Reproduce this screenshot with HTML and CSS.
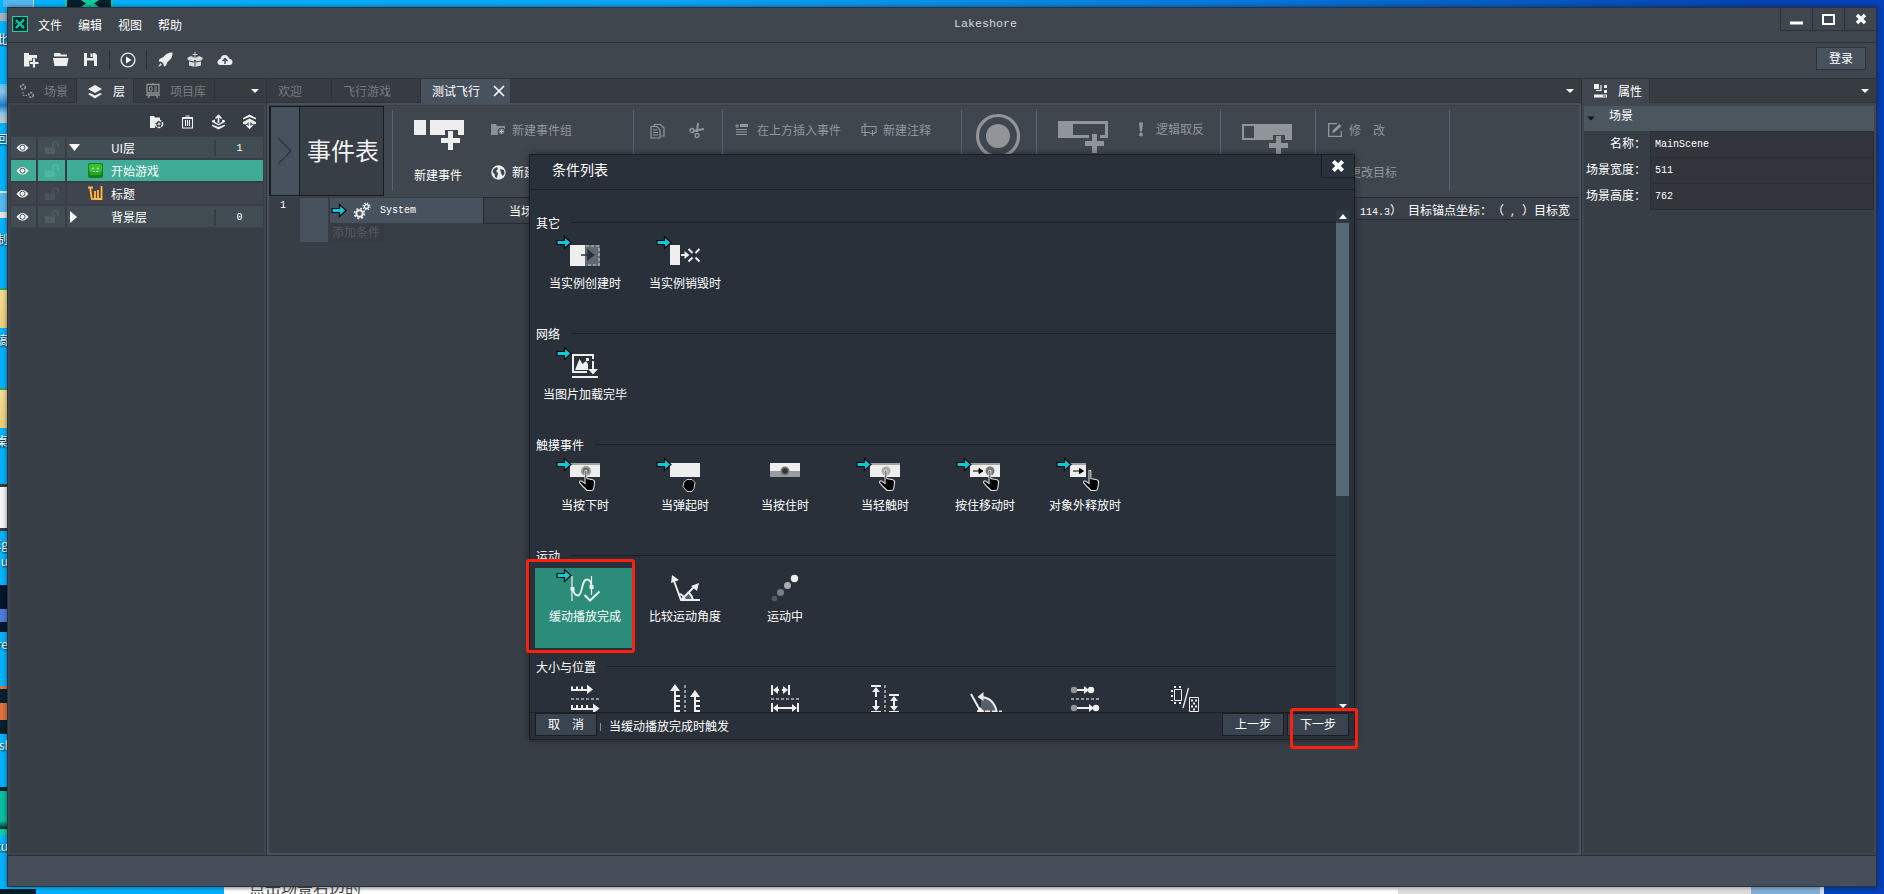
FILE: index.html
```html
<!DOCTYPE html>
<html lang="zh-CN">
<head>
<meta charset="utf-8">
<title>Lakeshore</title>
<link rel="stylesheet" href="styles.css">
</head>
<body>
<svg class="defs" width="0" height="0" aria-hidden="true">
  <symbol id="go" viewBox="0 0 16 15"><path d="M1 5.500h7.500v-4l6.500 6-6.500 6v-4H1z" fill="#0ccbd8" stroke="#05080c" stroke-width="1.200"/></symbol>
  <symbol id="eye" viewBox="0 0 14 10"><path d="M.5 5Q7-3.500 13.500 5 7 13 .5 5z" fill="#eee"/><circle cx="7" cy="4.700" r="2.700" fill="none" stroke="#46525a" stroke-width="1"/></symbol>
  <symbol id="lock" viewBox="0 0 16 14"><path d="M1 6.500h10v6.500H1zM5 9.500h2v1.500H5z" fill="currentColor" fill-rule="evenodd"/><path d="M9 6V3q0-2 2.500-2T14 3v3" fill="none" stroke="currentColor" stroke-width="1.600"/></symbol>
  <symbol id="hand" viewBox="0 0 18 22"><path d="M7 1q1.200-.8 1.800.5V9l6 1.200q2 .5 1.800 3l-1 6.300q-.3 1.500-2 1.500H9L5 17 1.500 13q0-2 2-1.500L7 14z" fill="#000" stroke="#dedede" stroke-width="1.100"/></symbol>
  <symbol id="tri" viewBox="0 0 8 4"><path d="M0 0h8L4 4z" fill="currentColor"/></symbol>
  <symbol id="cross" viewBox="0 0 12 12"><path d="M2 2l8 8M10 2l-8 8" stroke="#fff" stroke-width="3.400"/></symbol>
</svg>

<div class="desktop">
  <div class="bit bit-glass"></div><div class="bit bit-logo"><svg width="48" height="7"><path d="M14 7L24 0h8L22 7zM14 0h8l10 7h-8z" fill="#08cfa0"/></svg></div>
  <div class="bit bit-knob"></div><div class="bit cap" style="top:31px">此</div>
  <div class="bit bit-bin"></div><div class="bit cap" style="top:131px">回</div>
  <div class="bit bit-ctrl"></div><div class="bit cap" style="top:231px">制</div>
  <div class="bit bit-folder" style="top:288px"></div><div class="bit cap" style="top:332px">搞</div>
  <div class="bit bit-folder" style="top:388px"></div><div class="bit cap" style="top:433px">桌</div>
  <div class="bit bit-doc"></div><div class="bit cap" style="top:536px">Eg</div><div class="bit cap" style="top:553px">u</div>
  <div class="bit bit-blue"></div><div class="bit cap" style="top:636px">re</div>
  <div class="bit bit-orange"></div><div class="bit cap" style="top:737px">sl</div>
  <div class="bit bit-green"></div><div class="bit cap" style="top:838px">tu</div>
  <div class="under"><div class="under-dark"></div><div class="under-doc">点击场景右边的</div><div class="under-gray"></div><div class="under-sky"></div></div>
</div>

<div class="window">
  <header class="titlebar">
    <svg class="logo" width="16" height="16"><rect x=".5" y=".5" width="15" height="15" fill="#082c2e" stroke="#0bd9b0"/><path d="M4 4l8 8M12 3.500L4 12" stroke="#0cc9a4" stroke-width="2.200"/><path d="M3 8l3-3M9 12l3-3" stroke="#0a8f78"/></svg>
    <nav class="menu"><span>文件</span><span>编辑</span><span>视图</span><span>帮助</span></nav>
    <div class="app-name">Lakeshore</div>
    <div class="win-btns">
      <span><svg width="14" height="14"><rect x="0" y="9.500" width="13" height="3" fill="#fff"/></svg></span>
      <span><svg width="14" height="14"><rect x="1" y="3" width="11" height="9" fill="none" stroke="#fff" stroke-width="2"/></svg></span>
      <span><svg width="12" height="12"><use href="#cross"/></svg></span>
    </div>
  </header>

  <div class="toolbar">
    <svg width="16" height="16"><path d="M1 1h5v2h8v3.500H9.500V9H6.500v5.500H1z" fill="#eee"/><path d="M11 6v9.500M6.500 10.800H15.500" stroke="#3f464e" stroke-width="4"/><path d="M11 6.500v9M7 11H15.500" stroke="#eee" stroke-width="2.200"/></svg>
    <svg width="16" height="16"><path d="M1 1h6l1 1.500h6V4.500H1zM0 6h15.500L14 14H1.500z" fill="#eee"/></svg>
    <svg width="16" height="16"><path d="M1 1h11l2 2v11h-3V8.500H4V14H1z" fill="#eee"/><path d="M4 1h6v5H4z" fill="#3f464e"/><path d="M7.500 1.500h2v3.500h-2z" fill="#eee"/></svg>
    <i></i>
    <svg width="16" height="16"><circle cx="8" cy="8" r="6.900" fill="none" stroke="#eee" stroke-width="1.400"/><path d="M6 4.500L11.500 8 6 11.500z" fill="#fff"/></svg>
    <i></i>
    <svg width="16" height="16"><path d="M15.500.5Q10 0 6.500 5L2.500 7 1.500 9.500l3 .3 2 2 .5 3L9 13.500l1.500-3.500Q16 6 15.500.5z" fill="#eee"/><path d="M3.500 11L1 15l4-2z" fill="#ddd"/></svg>
    <svg width="16" height="16"><path d="M8 0v6M5.500 2.500h5" stroke="#c9cbcc"/><path d="M0 6l4-2 4 2 4-2 4 2-2 3v4.500L8 15l-6-1.500V9z" fill="#d9dbdb"/><path d="M2 9l5 1 1-2 1 2 5-1M8 8v7" fill="none" stroke="#42494f"/></svg>
    <svg width="16" height="16"><path d="M4 13Q0 13 .5 9.500 1 7 3.500 7 4 3 8 3q3 0 4 3.500 3.500.5 3.500 3.500T12.500 13z" fill="#eee"/><path d="M8 12V7M5.500 9L8 6.500 10.500 9" fill="none" stroke="#3f464e" stroke-width="1.400"/></svg>
    <button class="login">登录</button>
  </div>

  <main class="body">
    <aside class="left">
      <div class="tabs">
        <div class="tab scene dim"><svg width="16" height="16"><g fill="none" stroke="#92979b" stroke-width="1.800" stroke-dasharray="2 1"><circle cx="4" cy="4" r="2.300"/><circle cx="12" cy="12" r="2.300"/></g><path d="M4 9v3.500h4" fill="none" stroke="#92979b" stroke-dasharray="2 1"/></svg>场景</div>
        <div class="tab layer on"><svg width="14" height="14"><path d="M7 0l7 4-7 4-7-4z" fill="#eee"/><path d="M0 9l2-1 5 2.500L12 8l2 1-7 4.500z" fill="#eee"/></svg>层</div>
        <div class="tab lib dim"><svg width="14" height="15"><path d="M7 0v2M1 1.500h12v8.500H1zM0 12h14M4 12l-2 3M10 12l2 3" fill="none" stroke="#8d9295" stroke-width="1.300"/><path d="M3.500 4h2.500v4h-2.500zM8 4h3M8 6h3M8 8h3" fill="none" stroke="#8d9295"/></svg>项目库</div>
        <div class="rest"><svg width="8" height="4"><use href="#tri"/></svg></div>
      </div>
      <div class="layers">
        <div class="layer-tools">
          <svg width="15" height="14"><path d="M1 1h4l1 1.500h5V5Q5 6 6 13H1z" fill="#eee"/><circle cx="10" cy="9" r="3.600" fill="none" stroke="#eee" stroke-width="1.500" stroke-dasharray="3 1"/><path d="M10 7.500v3M8.500 9h3" stroke="#eee"/></svg>
          <svg width="15" height="14"><path d="M2.500 3.500h10v9.500h-10zM2 2.500h11M5.500 1h4M5.500 5v6M7.500 5v6M9.500 5v6" fill="none" stroke="#eee" stroke-width="1.100"/></svg>
          <svg width="15" height="16"><path d="M7.500 9V1.500M4.500 4.500l3-3 3 3" fill="none" stroke="#eee" stroke-width="1.700"/><path d="M1 6.500l3-1v2.500l3.500 2 3.500-2V5.500l3 1v1.500l-6.500 3.500L1 8zM1 10.500l6.500 2.500 6.500-2.500v1.500l-6.500 3.500L1 12z" fill="#eee"/></svg>
          <svg width="15" height="16"><path d="M7.500 7v7M4.500 11l3 3 3-3" fill="none" stroke="#eee" stroke-width="1.700"/><path d="M1 4l6.500-3.500L14 4v1.500L7.500 3 1 5.500zM1 8l6.500-3.500L14 8v2l-3 .5-3.500-3-3.500 3L1 10z" fill="#eee"/></svg>
        </div>
        <div class="lrow">
          <span><svg width="13" height="10"><use href="#eye"/></svg></span><span class="lk"><svg width="16" height="14"><use href="#lock"/></svg></span>
          <span class="lname"><svg class="tw" width="11" height="8"><path d="M0 0h11L5.500 7z" fill="#fff"/></svg><b><u>UI</u>层</b><em>1</em></span>
        </div>
        <div class="lrow sel">
          <span><svg width="13" height="10"><use href="#eye"/></svg></span><span class="lk"><svg width="16" height="14"><use href="#lock"/></svg></span>
          <span class="lname"><svg class="th" width="15" height="15"><rect width="15" height="15" rx="2" fill="#18811b"/><rect x="1" y="1" width="13" height="8" rx="2" fill="#39c230"/><rect x="2" y="9" width="11" height="3" fill="#28a624"/><path d="M4 6l2-1M9 5l2 1M5 8.500h5" stroke="#f1ffec" stroke-dasharray="2 1"/></svg><b>开始游戏</b></span>
        </div>
        <div class="lrow plain">
          <span><svg width="13" height="10"><use href="#eye"/></svg></span><span class="lk"><svg width="16" height="14"><use href="#lock"/></svg></span>
          <span class="lname"><svg class="th" width="15" height="15"><path d="M0 1.500h5M2 1l2 13M7 5v9M10 4v9M13.500 0v14M5 13h8" fill="none" stroke="#6b3c17" stroke-width="3.400"/><path d="M0 1.500h5M2 1l2 13M7 5v9M10 4v9M13.500 0v14M5 13h8" fill="none" stroke="#f2be55" stroke-width="1.800"/></svg><b>标题</b></span>
        </div>
        <div class="lrow">
          <span><svg width="13" height="10"><use href="#eye"/></svg></span><span class="lk"><svg width="16" height="14"><use href="#lock"/></svg></span>
          <span class="lname"><svg class="tw" width="11" height="12"><path d="M1 0v12l7-6z" fill="#fff"/></svg><b>背景层</b><em>0</em></span>
        </div>
      </div>
    </aside>

    <section class="center">
      <div class="tabs">
        <div class="tab c1 dim">欢迎</div><div class="tab c2 dim">飞行游戏</div>
        <div class="tab c3 on">测试飞行<svg width="12" height="12"><path d="M1 1l10 10M11 1L1 11" stroke="#fff" stroke-width="1.600"/></svg></div>
        <div class="rest"><svg width="8" height="4"><use href="#tri"/></svg></div>
      </div>
      <div class="sheet">
        <div class="ribbon">
          <div class="sheet-box"><span class="chev"><svg width="16" height="28"><path d="M1 1l13 13L1 27" fill="none" stroke="#2f343a" stroke-width="1.400"/></svg></span><span class="sheet-name">事件表</span></div>
          <div class="grp ga">
            <div class="big"><svg width="50" height="32"><path d="M0 1h12v15H0zM16 1h34v15H44v-5H31v5H16z" fill="#eee"/><path d="M36.500 12v19M27 21.500h19" stroke="#eee" stroke-width="5"/></svg><span>新建事件</span></div>
            <div class="col">
              <div class="act dim"><svg width="15" height="14"><path d="M0 1h5l1 2h8v4Q8 5 7 12H0z" fill="#8c9195"/><circle cx="10.500" cy="8.500" r="3.500" fill="#737a80" stroke="#3f464e"/><path d="M10.500 6.500v4M8.500 8.500h4" stroke="#c0c2c4"/></svg>新建事件组</div>
              <div class="act"><svg width="15" height="15"><circle cx="7.500" cy="7.500" r="7.200" fill="#eee"/><path d="M2.500 4l3.500-2 1 2-2 2 2 2-1 5-2-1-.5-3-2-2zM9 4l4 1 .5 4-2 2-1.500-3z" fill="#3f464e"/></svg>新建</div>
            </div>
          </div>
          <div class="grp gb">
            <svg width="15" height="16"><path d="M4.500 4V1.500h6L14 5v8h-3" fill="none" stroke="#92979b" stroke-width="1.200"/><path d="M1 3.500h6L10 7v8H1zM3 7h4M3 9.500h5M3 12h5" fill="none" stroke="#92979b" stroke-width="1.200"/></svg>
            <svg width="16" height="16"><path d="M9 0L8 9M15 6L4 8" stroke="#92979b" stroke-width="2"/><circle cx="3" cy="7.500" r="2" fill="none" stroke="#92979b" stroke-width="1.300"/><circle cx="8" cy="12.500" r="2" fill="none" stroke="#92979b" stroke-width="1.300"/></svg>
          </div>
          <div class="grp gc">
            <div class="act dim"><svg width="14" height="14"><path d="M0 3h4M2 1v4" stroke="#92979b"/><path d="M5 1h8v3H5z" fill="#92979b"/><path d="M1 6.500h11M1 9h11M1 11.500h11" stroke="#92979b" stroke-width="1.200"/></svg>在上方插入事件</div>
            <div class="act dim"><svg width="16" height="14"><path d="M9 9.500H1v-6h14v6h-2M4 1v11M2.500 1h3M2.500 12.500h3M11.500 7v6M9 10.500h5" fill="none" stroke="#92979b" stroke-width="1.100"/></svg>新建注释</div>
          </div>
          <div class="grp gd"><svg width="46" height="46"><circle cx="23" cy="23" r="20.500" fill="none" stroke="#919498" stroke-width="3.200"/><circle cx="23" cy="23" r="12" fill="#919498"/></svg></div>
          <div class="grp ge">
            <svg width="50" height="32"><path d="M0 0h50v17H42v-3h5V3H15v11h16v3H0z" fill="#919498"/><path d="M36.500 13v19M27 22.500h19" stroke="#919498" stroke-width="5"/></svg>
            <div class="act dim"><svg width="6" height="15"><path d="M1 1q2-1.500 4 0L4 9.500H2z" fill="#919498"/><circle cx="3" cy="12.500" r="2" fill="#919498"/></svg>逻辑取反</div>
          </div>
          <div class="grp gf"><svg width="50" height="32"><path d="M0 0h50v16H43v-5H31v5H0zM2 2v12h10V2z" fill="#919498" fill-rule="evenodd"/><path d="M36.500 12v20M27 21.500h19" stroke="#919498" stroke-width="5"/></svg></div>
          <div class="grp gg">
            <div class="act dim"><svg width="14" height="14"><path d="M9 .7H.7v12.600h12.600V8" fill="none" stroke="#92979b" stroke-width="1.300"/><path d="M4 10l1-3 6.500-6 2 2-6.500 6z" fill="#92979b"/></svg>修　改</div>
            <div class="act dim"><svg width="14" height="14"></svg>更改目标</div>
          </div>
        </div>
        <div class="events">
          <div class="num">1</div>
          <div class="bar"></div>
          <div class="cond">
            <div class="cond-row"><svg width="16" height="15"><use href="#go"/></svg><svg width="18" height="18"><g fill="none" stroke="#eee"><circle cx="6.500" cy="11.500" r="3.200" stroke-width="2"/><circle cx="6.500" cy="11.500" r="5" stroke-width="1.600" stroke-dasharray="2 1.930"/><circle cx="13.500" cy="4.500" r="2" stroke-width="1.300"/><circle cx="13.500" cy="4.500" r="3.400" stroke-width="1.200" stroke-dasharray="1.400 1.270"/></g></svg><span>System</span></div>
            <div class="add">添加条件</div>
          </div>
          <div class="run"><span>当场景</span></div>
          <div class="params"><span class="mono">114.3</span>）<span class="mono"> </span>目标锚点坐标：（<span class="mono"> , </span>）目标宽</div>
        </div>
      </div>
    </section>

    <aside class="right">
      <div class="tabs">
        <div class="tab prop on"><svg width="14" height="14"><path d="M0 0h5v5H0zM10 1h3v3h-3zM10 6h3v3h-3zM0 10.500h13v3H0z" fill="#eee"/><path d="M2 6.500h5V1" fill="none" stroke="#eee" stroke-width="1.200"/><path d="M9 12h3" stroke="#3f464e"/></svg>属性</div>
        <div class="rest"><svg width="8" height="4"><use href="#tri"/></svg></div>
      </div>
      <div class="props">
        <div class="phead"><svg width="8" height="5"><use href="#tri"/></svg>场景</div>
        <div class="prow"><label>名称：</label><div class="inp">MainScene</div></div>
        <div class="prow"><label>场景宽度：</label><div class="inp">511</div></div>
        <div class="prow"><label>场景高度：</label><div class="inp">762</div></div>
      </div>
    </aside>
  </main>
  <footer class="status"></footer>
</div>

<div class="dialog">
  <div class="dhead"><span>条件列表</span><div class="dclose"><svg width="14" height="14" viewBox="0 0 12 12"><use href="#cross"/></svg></div></div>
  <div class="dbody">
    <div class="list">
      <section><h3>其它</h3><div class="tiles">
        <div class="tile"><svg width="60" height="40"><path d="M15 10h15v21H15z" fill="#eee"/><path d="M30 10h15v21H30z" fill="#616871"/><path d="M31 11h13v19H31" fill="none" stroke="#969a9e" stroke-width="2" stroke-dasharray="3 2"/><path d="M26 20h8M33 15.500l5.500 4.500-5.500 4.500z" fill="#29303a" stroke="#29303a" stroke-width="1.500"/><use href="#go" x="1" y="0" width="16" height="15"/></svg>当实例创建时</div>
        <div class="tile"><svg width="60" height="40"><path d="M15 10h10v20H15z" fill="#eee"/><path d="M26 20h5" stroke="#eee" stroke-width="2"/><path d="M29.500 16l5 4-5 4z" fill="#eee"/><path d="M33.500 14l4 4M44.500 14l-4 4M33.500 26.500l4-4M44.500 26.500l-4-4" stroke="#eee" stroke-width="2"/><use href="#go" x="1" y="0" width="16" height="15"/></svg>当实例销毁时</div>
      </div></section>
      <section><h3>网络</h3><div class="tiles">
        <div class="tile"><svg width="60" height="40"><path d="M32 26H18V9h20v4" fill="none" stroke="#eee" stroke-width="2"/><path d="M20 24l4.500-11 3 5 3.500-3 2 3v6z" fill="#eee"/><path d="M31 12h3v3h-3z" fill="#eee"/><path d="M38 15v10M17 31h26" stroke="#eee" stroke-width="2"/><path d="M33 23h10l-5 5.500z" fill="#eee"/><use href="#go" x="1" y="0" width="16" height="15"/></svg>当图片加载完毕</div>
      </div></section>
      <section><h3>触摸事件</h3><div class="tiles">
        <div class="tile"><svg width="60" height="40"><path d="M15 6h30v14H15z" fill="#eee"/><path d="M15 6h30v2H15z" fill="#a0a3a6"/><circle cx="31" cy="14" r="5" fill="#999"/><circle cx="31" cy="14" r="3" fill="#666"/><use href="#hand" x="23" y="12.500" width="18" height="22"/><use href="#go" x="1" y="0" width="16" height="15"/></svg>当按下时</div>
        <div class="tile"><svg width="60" height="40"><path d="M15 6h30v14H15z" fill="#eee"/><path d="M29 25l3-2.500h5l3 3-1 6-2 3h-5l-4-5z" fill="#000" stroke="#ccc"/><use href="#go" x="1" y="0" width="16" height="15"/></svg>当弹起时</div>
        <div class="tile"><svg width="60" height="40"><path d="M15 6h30v8H15z" fill="#eee"/><path d="M15 14h30v6H15z" fill="#999c9f"/><circle cx="30" cy="14" r="4.500" fill="#777"/><circle cx="30" cy="14" r="2.700" fill="#333"/></svg>当按住时</div>
        <div class="tile"><svg width="60" height="40"><path d="M15 6h30v14H15z" fill="#eee"/><path d="M15 6h30v2H15z" fill="#a0a3a6"/><circle cx="31" cy="14" r="4.500" fill="#aaa"/><use href="#hand" x="23" y="12.500" width="18" height="22"/><use href="#go" x="1" y="0" width="16" height="15"/></svg>当轻触时</div>
        <div class="tile"><svg width="60" height="40"><path d="M15 6h30v14H15z" fill="#eee"/><path d="M15 6h30v2H15z" fill="#a0a3a6"/><circle cx="35" cy="14" r="4.500" fill="#777"/><path d="M18 14h7M24 11.500l4 2.500-4 2.500z" stroke="#000"/><use href="#hand" x="27" y="12.500" width="18" height="22"/><use href="#go" x="1" y="0" width="16" height="15"/></svg>按住移动时</div>
        <div class="tile"><svg width="60" height="40"><path d="M15 6h16v14H15z" fill="#eee"/><path d="M15 6h16v2H15z" fill="#a0a3a6"/><path d="M18 14h8M24.500 11.500l4 2.500-4 2.500z" stroke="#000"/><use href="#hand" x="27" y="12.500" width="18" height="22"/><use href="#go" x="1" y="0" width="16" height="15"/></svg>对象外释放时</div>
      </div></section>
      <section><h3>运动</h3><div class="tiles">
        <div class="tile picked"><svg width="60" height="40"><path d="M17 8v25M36.500 8v19" stroke="#eee" stroke-width="1.200"/><path d="M17.500 21q2 6.500 5.500 6.500c5 0 3-16 9-16q4 0 4.500 7" fill="none" stroke="#eee" stroke-width="1.800"/><path d="M15.500 19h4v4h-4zM34.500 17h4v4h-4z" fill="#eee"/><path d="M29.500 27l5.500 5.500 9.500-9" fill="none" stroke="#eee" stroke-width="2"/><use href="#go" x="1" y="0" width="16" height="15"/></svg>缓动播放完成</div>
        <div class="tile"><svg width="60" height="40"><path d="M27 32l6-9q5 3 5 9z" fill="#59626b"/><path d="M45 32H26L19 13M26 32l13-13M33 24q4 3 5 8M24 26q4 0 6 6" fill="none" stroke="#eee" stroke-width="1.900"/><path d="M16 15l1-8 7 5zM36 18l8-3-2 8z" fill="#eee"/></svg>比较运动角度</div>
        <div class="tile"><svg width="60" height="40"><circle cx="39.500" cy="10.500" r="3.700" fill="#eee"/><circle cx="32.500" cy="17.500" r="3.500" fill="#aaadb1"/><circle cx="25.500" cy="24.500" r="3.500" fill="#787e86"/><circle cx="19.500" cy="30.500" r="2.800" fill="#535b65"/></svg>运动中</div>
      </div></section>
      <section><h3>大小与位置</h3><div class="tiles">
        <div class="tile"><svg width="60" height="40"><g stroke="#eee"><path d="M16 11h17M16 30h23" stroke-width="2"/><path d="M17 10V7.500M22 10V7.500M27 10V7.500M17 29v-3M22 29v-3M27 29v-3M32 29v-3" stroke-width="2"/></g><path d="M32 5.500l6 5-6 4.500zM38 24.500l6.500 5-6.500 5z" fill="#eee"/><path d="M16 20h28" stroke="#92969b" stroke-width="2" stroke-dasharray="3 2"/></svg></div>
        <div class="tile"><svg width="60" height="40"><g stroke="#eee" stroke-width="2"><path d="M20 10v28M40 16v22M21 17h4M21 22h4M21 27h4M21 32h4M41 22h4M41 27h4M41 32h4"/></g><path d="M15 12l5-7 5 7zM35 18l5-7 5 7z" fill="#eee"/><path d="M30 6v30" stroke="#92969b" stroke-width="2" stroke-dasharray="3 2"/></svg></div>
        <div class="tile"><svg width="60" height="40"><path d="M17 6v10M34 6v10M17 24v10M43 24v10M20 11h4M27 11h4M20 29h21" stroke="#eee" stroke-width="2"/><path d="M18 11l5-4v8zM33 11l-5-4v8zM18 29l5-4v8zM42 29l-5-4v8z" fill="#eee"/><path d="M16 20h28" stroke="#92969b" stroke-width="2" stroke-dasharray="3 2"/></svg></div>
        <div class="tile"><svg width="60" height="40"><path d="M16 7h10M16 33h10M34 16h10M34 33h10M21 10v8M21 21v9M39 19v12" stroke="#eee" stroke-width="2"/><path d="M21 8l-4 5h8zM21 32l-4-5h8zM39 17l-4 5h8zM39 32l-4-5h8z" fill="#eee"/><path d="M30 6v30" stroke="#92969b" stroke-width="2" stroke-dasharray="3 2"/></svg></div>
        <div class="tile"><svg width="60" height="40"><path d="M26 34V22q1-3 4-3 9 2 11 15z" fill="#555e67"/><path d="M16 15l10 18M25 18q14 0 17 16" fill="none" stroke="#eee" stroke-width="2"/><path d="M22.500 18l6-5v9zM22 32l3-4 4 4v2h-7z" fill="#eee"/><path d="M30 33h17" stroke="#eee" stroke-width="3" stroke-dasharray="5 2"/></svg></div>
        <div class="tile"><svg width="60" height="40"><path d="M21 11h10M21 29h16" stroke="#eee" stroke-width="2"/><path d="M29 7l5 4-5 4zM34 25l5 4-5 4z" fill="#eee"/><g fill="#92969b"><circle cx="19" cy="11" r="3.200"/><circle cx="19" cy="29" r="3.200"/></g><g fill="#eee"><circle cx="36" cy="11" r="3.200"/><circle cx="41" cy="29" r="3.200"/></g><path d="M16 20h28" stroke="#92969b" stroke-width="2" stroke-dasharray="3 2"/></svg></div>
        <div class="tile"><svg width="60" height="40"><g fill="none" stroke="#eee"><path d="M19.500 10.500h7v11h-7zM34.500 18.500h9v14h-9z"/><path d="M19 8h9M19 24h9M17 11v11" stroke-width="2" stroke-dasharray="2 3"/><path d="M33.500 9L28 29" stroke-width="1.300"/><path d="M36 21.500h7M36 27.500h7M38 24.500h3M38 30.500h3" stroke-width="2" stroke-dasharray="2 2"/></g></svg></div>
      </div></section>
    </div>
    <div class="scroll"><svg width="8" height="5"><path d="M0 5h8L4 0z" fill="#fff"/></svg><div class="thumb"></div><svg width="8" height="4"><use href="#tri"/></svg></div>
  </div>
  <div class="dfoot"><button>取　消</button><i></i><span>当缓动播放完成时触发</span><button class="prev">上一步</button><button>下一步</button></div>
</div>
<div class="mark m1"></div>
<div class="mark m2"></div>
</body>
</html>
```

FILE: styles.css
```css
* { box-sizing: border-box; }
body {
  margin: 0; width: 1884px; height: 894px; overflow: hidden; position: relative;
  font: 12px/16px "Noto Sans CJK SC", sans-serif; color: #fff; text-spacing-trim: space-all;
}
svg { display: block; flex: none; }
.defs { position: absolute; }
button { font: inherit; color: inherit; padding: 0; }

/* desktop behind the window */
.desktop { position: absolute; inset: 0; background: linear-gradient(90deg, #00b2ff 0, #0da4f5 35%, #0878dc 65%, #0445b5 92%, #0540b8 100%); overflow: hidden; }
.bit { position: absolute; left: 0; width: 8px; overflow: hidden; }
.cap { height: 18px; display: flex; justify-content: flex-end; text-shadow: 1px 1px 2px #000; }
.bit-glass { left: 3px; top: 0; width: 31px; height: 7px; background: #55b7ee; border-right: 1px solid #b8dcf2; }
.bit-logo { left: 65px; top: 0; width: 48px; height: 7px; background: #04202c; border: solid #08cfa0; border-width: 0 2px; }
.bit-knob { top: 13px; height: 8px; background: #a9b2b8; }
.bit-bin { top: 84px; height: 39px; background: linear-gradient(#5cc0f0, #8ec8e8 20%, #1d7fd0 55%, #8ec8e8 75%, #c8c8c8); }
.bit-ctrl { top: 191px; height: 27px; background: #55baf0; border: solid #e6e6e6; border-width: 2px 0 6px; }
.bit-folder { height: 40px; background: linear-gradient(#f3dc92, #e9cf7e); border-top: 2px solid #3aa257; }
.bit-doc { top: 484px; height: 47px; background: #f4f4f4; border: solid #3b3b3b; border-width: 3px 0; }
.bit-blue { top: 585px; height: 47px; background: linear-gradient(#04152c 50%, #4b7de0 50%, #4b7de0 78%, #04152c 78%); }
.bit-orange { top: 686px; height: 48px; background: linear-gradient(#df713f 3px, #08202d 3px 17px, #df713f 17px 34px, #08202d 34px); }
.bit-green { top: 787px; height: 48px; background: linear-gradient(#04202c 4px, #08bfa0 4px 34px, #04202c 42px, #08cfa0 42px); }
.under { position: absolute; left: 0; right: 60px; bottom: 0; height: 8px; display: flex; }
.under-dark { width: 36px; margin: 3px 188px 0 0; background: #041c2b; }
.under-doc { width: 1174px; background: linear-gradient(#c9c9c9, #fff 5px); overflow: hidden; color: #444; font-size: 16px; line-height: 2px; padding-left: 25px; }
.under-gray { width: 353px; background: #dedede; }
.under-sky { flex: 1; background: #82aed8; border-right: 4px solid #d6dde6; }

/* application window */
.window { position: absolute; left: 7px; top: 7px; width: 1870px; height: 880px; display: flex; flex-direction: column; background: #3f464e; border: 1px solid #2d3238; box-shadow: 0 0 5px rgba(0,0,0,.45); }
.titlebar { height: 35px; border-bottom: 1px solid #2e3338; display: flex; position: relative; padding-left: 4px; flex: none; }
.logo { margin-top: 8px; }
.menu { display: flex; gap: 16px; padding: 9px 0 0 10px; }
.app-name { position: absolute; left: 946px; top: 8px; font: 11.7px/16px "Liberation Mono", monospace; color: #d5d8da; }
.win-btns { display: flex; margin-left: auto; }
.win-btns span { width: 32px; height: 23px; border: solid #2c3136; border-width: 0 0 1px 1px; display: flex; align-items: center; justify-content: center; }
.toolbar { height: 36px; border-bottom: 1px solid #2e3338; display: flex; align-items: center; padding: 0 10px 2px 15px; gap: 14px; flex: none; }
.toolbar i { width: 1px; height: 20px; background: #2c3136; margin: 0 -4px; }
.login { margin-left: auto; width: 50px; height: 23px; background: #48525f; border: 1px solid #2c3238; line-height: 18px; padding-bottom: 2px; position: relative; top: -1px; }

.body { display: grid; grid-template-columns: 259px 1315px 1fr; height: 776px; flex: none; }
.body > * { display: flex; flex-direction: column; border-right: 1px solid #2e3338; min-width: 0; }
.body > .right { border: 0; }
.tabs { display: flex; height: 24px; background: #373b42; flex: none; }
.tab { display: flex; align-items: center; border: solid #2e3338; border-width: 0 1px 1px 0; }
.tab.on { background: #3f464e; border-bottom-color: #3f464e; }
.dim { color: #92979d; }
.tab.dim { color: #777b80; }
.rest { flex: 1; display: flex; align-items: center; justify-content: flex-end; border-bottom: 1px solid #2e3338; }
.scene { width: 69px; padding-left: 11px; gap: 9px; }
.layer { width: 57px; padding-left: 11px; gap: 11px; }
.layer svg { margin-top: 2px; }
.lib { width: 81px; padding-left: 12px; gap: 10px; }
.left .rest { padding-right: 7px; }
.c1 { width: 65px; padding-left: 11px; }
.c2 { width: 89px; padding-left: 11px; }
.c3.on { width: 89px; padding-left: 11px; gap: 13px; background: #48525f; border-color: #48525f; }
.center .rest { padding-right: 7px; }
.prop { width: 68px; padding-left: 12px; gap: 10px; }
.right .rest { padding-right: 7px; }

/* layer list */
.layers { margin: 2px; flex: 1; background: #383e46; padding: 0 1px; }
.layer-tools { display: flex; height: 32px; align-items: center; gap: 16px; justify-content: flex-end; padding: 1px 6px 0 0; }
.lrow { display: grid; grid-template-columns: 25px 27px 196px; gap: 2px; height: 21px; margin-bottom: 2px; }
.lrow > span { background: #414d52; display: flex; align-items: center; justify-content: center; }
.lrow > span:first-child { padding-right: 2px; }
.lrow.sel > span { background: #40ab96; }
.lrow.plain > span { background: #3f444e; }
.lk { color: #525e62; }
.sel .lk { color: #52b6a2; }
.plain .lk { color: #4c535c; }
.lrow > .lname { justify-content: flex-start; }
.lname b { font-weight: 400; }
.lname u { text-decoration: none; display: inline-block; width: 12px; letter-spacing: -.2px; }
.tw { margin: 0 31px 0 2px; }
.th { margin: 0 8px 0 21px; }
.lname em { font: 10px/17px "Liberation Mono", monospace; margin-left: auto; width: 49px; height: 16px; border-left: 2px solid #363d43; text-align: center; }

/* event sheet */
.sheet { flex: 1; border: 2px solid #48525f; background: #383e46; display: flex; flex-direction: column; min-width: 0; overflow: hidden; }
.ribbon { height: 92px; background: #3f464e; display: flex; border-top: 1px solid #363c42; flex: none; }
.sheet-box { width: 115px; height: 90px; border: 1px solid #181b1e; border-left-width: 2px; display: flex; background: #383e46; margin-right: 8px; }
.chev { width: 29px; background: #48525f; border-right: 1px solid #181b1e; display: flex; align-items: center; justify-content: center; }
.sheet-name { font-size: 24px; line-height: 86px; padding-left: 7px; color: #f2f2f2; white-space: nowrap; }
.grp { border-left: 1px solid #56657a; height: 80px; margin-top: 4px; display: flex; flex: none; }
.act { display: flex; align-items: center; height: 16px; gap: 7px; white-space: nowrap; }
.ga { width: 241px; padding: 9px 0 0 21px; }
.big { width: 77px; display: flex; flex-direction: column; gap: 16px; }
.col { display: flex; flex-direction: column; gap: 26px; padding-top: 3px; }
.col .act { gap: 6px; }
.gb { width: 89px; padding: 13px 0 0 16px; gap: 24px; }
.gc { width: 239px; padding: 12px 0 0 12px; gap: 20px; }
.gc .act:first-child { gap: 8px; }
.gc .act:last-child { gap: 6px; }
.gd { width: 75px; padding: 3px 0 0 13px; }
.ge { width: 184px; padding: 11px 0 0 21px; gap: 30px; }
.ge .act { gap: 12px; }
.gf { width: 95px; padding: 14px 0 0 21px; }
.gg { width: 135px; padding: 12px 0 0 12px; flex-direction: column; gap: 26px; border-right: 1px solid #56657a; }
.gg .act { gap: 7px; }
.events { display: flex; padding: 1px 0 0 1px; }
.num { width: 30px; text-align: center; font: 10px/16px "Liberation Mono", monospace; padding-right: 4px; }
.bar { width: 28px; height: 44px; background: #48525f; margin-right: 2px; }
.cond { width: 153px; }
.cond-row { background: #48525f; height: 25px; display: flex; align-items: center; gap: 6px; padding-left: 1px; }
.cond-row span { font: 10px/16px "Liberation Mono", monospace; padding: 1px 0 0 3px; }
.add { width: 54px; height: 19px; line-height: 18px; background: #373b42; color: #555a61; padding-left: 2px; }
.run { width: 300px; height: 27px; margin-top: -1px; border: 1px solid #26292d; background: #3a4047; padding: 5px 0 0 25px; }
.params { flex: 1; height: 23px; margin-top: -1px; border: solid #26292d; border-width: 1px 0; background: #3a4049; padding: 4px 0 0 577px; white-space: pre; overflow: hidden; }
.mono { font-family: "Liberation Mono", monospace; font-size: 10px; }

/* properties */
.props { margin: 3px 2px 2px; flex: 1; background: #383e46; }
.phead { height: 25px; background: #4c565f; display: flex; align-items: center; gap: 14px; padding: 0 0 8px 3px; }
.phead svg { color: #14181b; position: relative; top: 4px; }
.prow { display: grid; grid-template-columns: 66px 1fr; height: 23px; margin-bottom: 3px; }
.prow label { text-align: right; padding: 4px 4px 0 0; white-space: nowrap; }
.inp { background: #33353d; border: 1px solid #2c2f36; font: 10px/24px "Liberation Mono", monospace; padding: 1px 0 0 4px; }
.status { flex: 1; background: #464f59; border-top: 1px solid #2b3036; }

/* condition picker */
.dialog { position: absolute; left: 529px; top: 154px; width: 826px; height: 586px; display: flex; flex-direction: column; background: #29303a; border: 1px solid #1a1e22; box-shadow: 0 0 7px rgba(0,0,0,.4); }
.dhead { height: 35px; border-bottom: 1px solid #1b1f23; display: flex; justify-content: space-between; padding-left: 22px; font-size: 14px; line-height: 28px; flex: none; }
.dclose { width: 33px; height: 23px; border: solid #1b1f23; border-width: 0 0 1px 1px; display: flex; align-items: center; justify-content: center; background: #2a333b; }
.dbody { height: 523px; display: flex; border-bottom: 1px solid #201f20; flex: none; overflow: hidden; }
.list { width: 806px; padding: 24px 0 0 5px; }
.list section { height: 111px; }
.list h3 { margin: 0 0 3px; padding-left: 1px; font-weight: 400; font-size: 12px; line-height: 18px; display: flex; align-items: center; gap: 11px; }
.list h3::after { content: ""; flex: 1; height: 1px; background: #1f1e1f; margin-bottom: 1px; }
.tiles { display: flex; }
.tile { width: 100px; height: 80px; display: flex; flex-direction: column; align-items: center; white-space: nowrap; }
.picked { background: linear-gradient(#2b8c7a, #2b8c7a) no-repeat 0 0 / 97px 80px; }
.scroll { width: 13px; margin: 20px 0 4px; background: #2d3942; display: flex; flex-direction: column; align-items: center; }
.scroll svg { margin: 4px 0; }
.scroll svg:last-child { margin: auto 0 0; }
.thumb { width: 13px; height: 273px; background: #556a77; }
.dfoot { display: flex; padding: 0 5px; flex: 1; }
.dfoot button { width: 62px; height: 23px; background: #3a4451; border: 1px solid #1a1e22; padding-bottom: 1px; }
.dfoot i { width: 1px; height: 8px; background: #8a8f95; margin: 10px 8px 0 3px; }
.dfoot span { padding-top: 5px; }
.dfoot .prev { margin: 0 3px 0 auto; }

/* callout frames */
.mark { position: absolute; border: 3px solid #ff2010; border-radius: 3px; }
.m1 { left: 526px; top: 559px; width: 109px; height: 94px; }
.m2 { left: 1290px; top: 708px; width: 68px; height: 41px; }
```
